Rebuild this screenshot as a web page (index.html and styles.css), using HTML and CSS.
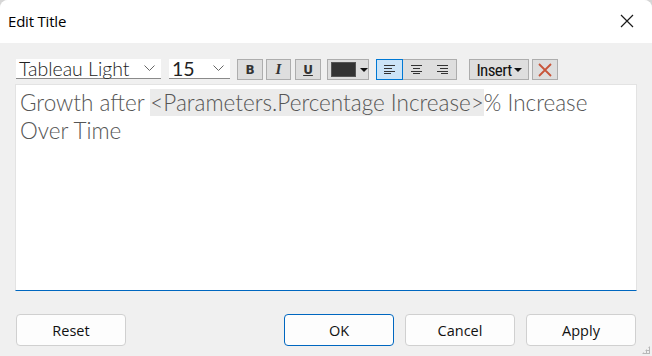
FILE: index.html
```html
<!DOCTYPE html>
<html lang="en">
<head>
  <meta charset="UTF-8" />
  <title>Edit Title</title>
  <link rel="stylesheet" href="styles.css">
</head>
<body>

<div class="dialog">
  <div class="titlebar">
    <span class="caption">Edit Title</span>
    <svg class="close" width="14" height="14" viewBox="0 0 14 14">
      <path d="M1 1 L13 13 M13 1 L1 13" stroke="#1a1a1a" stroke-width="1.2" fill="none" />
    </svg>
  </div>

  <div class="toolbar">
    <div class="combo font-combo">
      <span>Tableau Light</span>
      <svg width="11" height="7" viewBox="0 0 11 7"><path d="M0.5 0.5 L5.5 5.5 L10.5 0.5" stroke="#666" fill="none" /></svg>
    </div>
    <div class="combo size-combo">
      <span>15</span>
      <svg width="11" height="7" viewBox="0 0 11 7"><path d="M0.5 0.5 L5.5 5.5 L10.5 0.5" stroke="#666" fill="none" /></svg>
    </div>
    <div class="tbtn bold">B</div>
    <div class="tbtn italic">I</div>
    <div class="tbtn underline">U</div>
    <div class="tbtn color-btn">
      <span class="swatch"></span>
      <span class="caret"></span>
    </div>
    <div class="align-group">
      <div class="align active">
        <svg width="11" height="9" viewBox="0 0 11 9"><path d="M0 0.5H11M0 3.5H8M0 6.5H11M0 8.5H7" stroke="#333" /></svg>
      </div>
      <div class="align">
        <svg width="11" height="9" viewBox="0 0 11 9"><path d="M0 0.5H11M2 3.5H9M0 6.5H11M2 8.5H9" stroke="#333" /></svg>
      </div>
      <div class="align">
        <svg width="11" height="9" viewBox="0 0 11 9"><path d="M0 0.5H11M3 3.5H11M0 6.5H11M4 8.5H11" stroke="#333" /></svg>
      </div>
    </div>
    <div class="tbtn insert-btn">Insert<span class="caret"></span></div>
    <div class="tbtn clear-btn">
      <svg width="14" height="14" viewBox="0 0 14 14"><path d="M1 1 L13 13 M13 1 L1 13" stroke="#c8553a" stroke-width="1.8" fill="none" /></svg>
    </div>
  </div>

  <div class="editor">
    <p>Growth after <span class="field">&lt;Parameters.Percentage Increase&gt;</span>% Increase Over Time</p>
  </div>

  <div class="footer">
    <button class="reset">Reset</button>
    <div class="right">
      <button class="default">OK</button>
      <button>Cancel</button>
      <button>Apply</button>
    </div>
  </div>
  <div class="grip"></div>
</div>

</body>
</html>
```

FILE: styles.css
```css
body {
  margin: 0;
  background: #d6d6d6;
  font-family: 'Open Sans', 'Noto Sans', sans-serif;
}

.dialog {
  position: relative;
  width: 652px;
  height: 356px;
  background: #f0f0f0;
  border-radius: 8px 8px 0 0;
  overflow: hidden;
}

.titlebar {
  height: 43px;
  background: #fff;
  display: flex;
  align-items: center;
  justify-content: space-between;
  padding: 0 18px 1px 8px;
  box-sizing: border-box;
}

.caption {
  font-size: 15px;
  color: #000;
  letter-spacing: -0.2px;
}

.toolbar {
  display: flex;
  align-items: flex-start;
  margin-top: 16px;
  padding-left: 16px;
  height: 21px;
}

.combo {
  height: 20px;
  background: #fff;
  border-bottom: 1px solid #8a8a8a;
  box-sizing: border-box;
  display: flex;
  align-items: center;
  justify-content: space-between;
  padding: 0 6px 0 3px;
  font-family: 'Lato', sans-serif;
  font-weight: 300;
  font-size: 19.5px;
  line-height: 19px;
  color: #222;
}

.font-combo {
  width: 145px;
}

.size-combo {
  width: 61px;
  margin-left: 8px;
  font-weight: 400;
}

.tbtn {
  height: 21px;
  box-sizing: border-box;
  background: #dedede;
  border: 1px solid #adadad;
  display: flex;
  align-items: center;
  justify-content: center;
  font-size: 12px;
  color: #333;
}

.bold {
  width: 26px;
  margin-left: 7px;
  font-weight: 700;
  font-family: 'DejaVu Sans', sans-serif;
  font-size: 12px;
}

.italic {
  width: 25px;
  margin-left: 3px;
  font-style: italic;
  font-weight: 700;
  font-family: 'Liberation Serif', serif;
  font-size: 15px;
}

.underline {
  width: 26px;
  margin-left: 4px;
  text-decoration: underline;
  font-weight: 700;
  font-family: 'DejaVu Sans', sans-serif;
  font-size: 12px;
}

.color-btn {
  width: 42px;
  margin-left: 6px;
  justify-content: flex-start;
  padding-left: 3px;
}

.swatch {
  width: 26px;
  height: 15px;
  background: #333;
  border: 1px solid #555;
  box-sizing: border-box;
}

.caret {
  width: 0;
  height: 0;
  border-left: 4px solid transparent;
  border-right: 4px solid transparent;
  border-top: 4px solid #111;
  margin-left: 4px;
}

.align-group {
  display: flex;
  width: 81px;
  height: 21px;
  margin-left: 7px;
  background: #dedede;
  border: 1px solid #adadad;
  box-sizing: border-box;
}

.align {
  flex: 1;
  display: flex;
  align-items: center;
  justify-content: center;
}

.align.active {
  background: #cce4f7;
  outline: 1px solid #0078d4;
  outline-offset: -1px;
  margin: -1px 0 -1px -1px;
}

.insert-btn {
  width: 60px;
  margin-left: 12px;
  font-family: 'Liberation Sans Narrow', 'Roboto Condensed', 'Roboto', sans-serif;
  font-size: 17px;
  color: #111;
  letter-spacing: -0.6px;
}

.insert-btn .caret {
  margin-left: 2px;
}

.clear-btn {
  width: 26px;
  margin-left: 3px;
}

.editor {
  margin: 4px 15px 0;
  height: 207px;
  background: #fff;
  border: 1px solid #e3e3e3;
  border-bottom: 1px solid #0067c0;
  box-sizing: border-box;
  padding: 4px 5px 0 4px;
}

.editor p {
  margin: 0;
  font-family: 'Lato', sans-serif;
  font-weight: 300;
  font-size: 22.5px;
  line-height: 28px;
  color: #555;
}

.field {
  background: #ebebeb;
}

.footer {
  display: flex;
  justify-content: space-between;
  margin: 23px 16px 0 16px;
}

.right {
  display: flex;
  gap: 11px;
}

button {
  width: 110px;
  height: 32px;
  background: #fdfdfd;
  border: 1px solid #d0d0d0;
  border-radius: 4px;
  font-family: 'Open Sans', 'Noto Sans', sans-serif;
  font-size: 14.5px;
  color: #111;
  padding: 0;
}

button.default {
  border-color: #0067c0;
}

.grip {
  position: absolute;
  right: 2px;
  bottom: 2px;
  width: 8px;
  height: 8px;
  background: radial-gradient(circle, #b8b8b8 1px, transparent 1.2px) 0 0 / 3px 3px;
  clip-path: polygon(100% 0, 100% 100%, 0 100%);
}
```
